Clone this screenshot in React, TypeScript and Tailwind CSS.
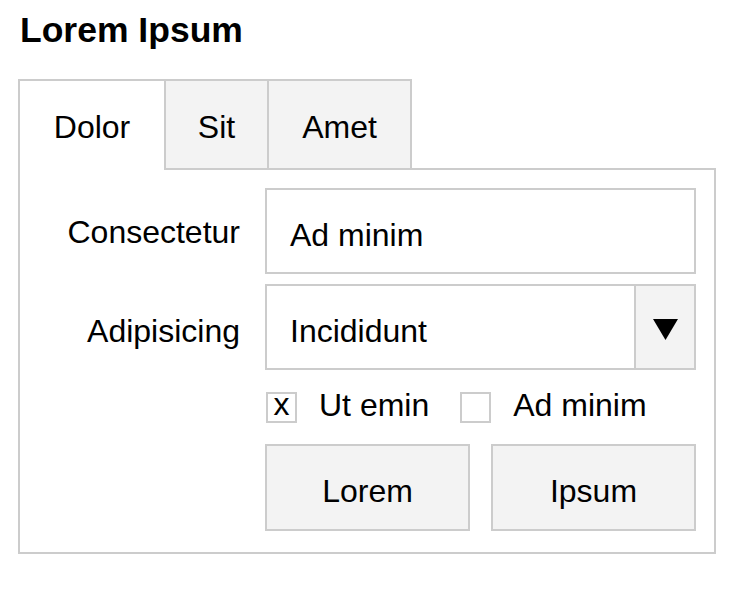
import React from "react";

const font = "font-['Liberation_Sans',Arial,Helvetica,sans-serif]";

function Triangle() {
  return (
    <svg width="25" height="21" viewBox="0 0 25 21" aria-hidden="true">
      <polygon points="0,0 25,0 12.5,21" fill="#000" />
    </svg>
  );
}

function Checkbox({ checked }: { checked: boolean }) {
  return (
    <div className="mt-[5px] w-[31px] h-[31px] border-2 border-[#cccccc] bg-white flex justify-center">
      {checked && <span className="block leading-[21px] text-[32px]">x</span>}
    </div>
  );
}

export default function App() {
  return (
    <div className={`${font} text-black bg-white min-h-[612px] pl-[18px] pt-[10px]`}>
      <h1 className="text-[35.5px] font-bold leading-[40px] pl-[2px]">Lorem Ipsum</h1>
      <div className="mt-[29px] w-[698px] text-[32px] leading-[36px]">
        <div className="flex items-start relative z-10 -mb-[2px]">
          <div className="w-[148px] h-[91px] bg-white border-l-2 border-t-2 border-r-2 border-[#cccccc] pt-[28px] text-center">
            Dolor
          </div>
          <div className="w-[103px] h-[89px] bg-[#f3f3f3] border-t-2 border-r-2 border-[#cccccc] pt-[28px] text-center">
            Sit
          </div>
          <div className="w-[143px] h-[89px] bg-[#f3f3f3] border-t-2 border-r-2 border-[#cccccc] pt-[28px] text-center">
            Amet
          </div>
        </div>
        <div className="border-2 border-[#cccccc] pt-[18px] pr-[18px] pb-[21px]">
          <div className="grid grid-cols-[220px_431px] gap-x-[25px]">
            <div className="text-right pt-[26px]">Consectetur</div>
            <div className="h-[86px] border-2 border-[#cccccc] pl-[23px] pt-[27px]">Ad minim</div>

            <div className="text-right pt-[29px] mt-[10px]">Adipisicing</div>
            <div className="mt-[10px] h-[86px] border-2 border-[#cccccc] flex">
              <div className="flex-1 pl-[23px] pt-[27px]">Incididunt</div>
              <div className="w-[60px] border-l-2 border-[#cccccc] bg-[#f3f3f3] flex justify-center pt-[33px]">
                <Triangle />
              </div>
            </div>

            <div />
            <div className="mt-[17px] flex items-start">
              <div className="ml-[1px]">
                <Checkbox checked />
              </div>
              <span className="ml-[22px]">Ut emin</span>
              <div className="ml-[31px]">
                <Checkbox checked={false} />
              </div>
              <span className="ml-[22px]">Ad minim</span>
            </div>

            <div />
            <div className="mt-[21px] grid grid-cols-2 gap-[21px]">
              <button className="h-[87px] border-2 border-[#cccccc] bg-[#f3f3f3] pt-[27px] text-center leading-[36px] text-[32px] flex justify-center items-start">
                Lorem
              </button>
              <button className="h-[87px] border-2 border-[#cccccc] bg-[#f3f3f3] pt-[27px] text-center leading-[36px] text-[32px] flex justify-center items-start">
                Ipsum
              </button>
            </div>
          </div>
        </div>
      </div>
    </div>
  );
}
